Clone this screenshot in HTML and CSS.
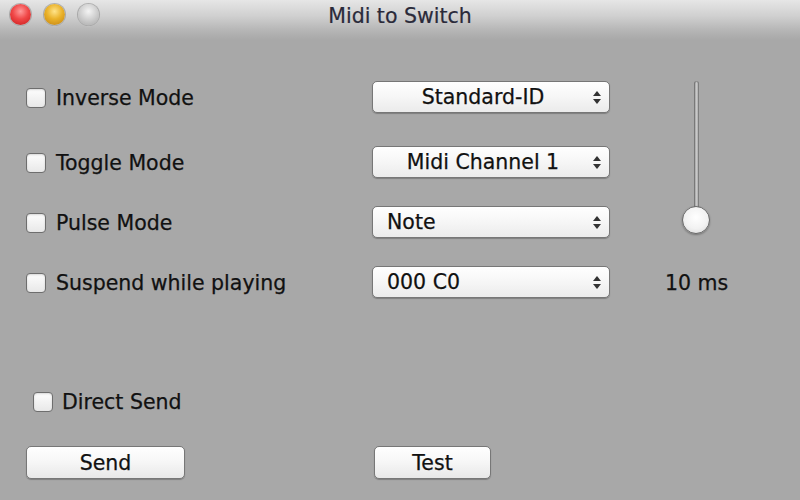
FILE: index.html
```html
<!DOCTYPE html>
<html>
<head>
<meta charset="utf-8">
<link rel="stylesheet" href="styles.css">
</head>
<body>
<div class="window">
  <div class="titlebar">
    <div class="lights">
      <span class="light red"></span>
      <span class="light yellow"></span>
      <span class="light gray"></span>
    </div>
    <div class="title">Midi to Switch</div>
  </div>
  <div class="content">
    <div class="form">
      <label class="check r1"><span class="box"></span>Inverse Mode</label>
      <div class="popup center r1c"><span class="ptext">Standard-ID</span><span class="arrows"><i class="up"></i><i class="down"></i></span></div>
      <div class="slider">
        <div class="track"></div>
        <div class="knob"></div>
      </div>

      <label class="check r2"><span class="box"></span>Toggle Mode</label>
      <div class="popup center r2c"><span class="ptext">Midi Channel 1</span><span class="arrows"><i class="up"></i><i class="down"></i></span></div>

      <label class="check r3"><span class="box"></span>Pulse Mode</label>
      <div class="popup r3c"><span class="ptext">Note</span><span class="arrows"><i class="up"></i><i class="down"></i></span></div>

      <label class="check r4"><span class="box"></span>Suspend while playing</label>
      <div class="popup r4c"><span class="ptext">000 C0</span><span class="arrows"><i class="up"></i><i class="down"></i></span></div>
      <div class="ms">10 ms</div>
    </div>

    <label class="check direct"><span class="box"></span>Direct Send</label>

    <div class="buttons">
      <button class="btn send">Send</button>
      <button class="btn test">Test</button>
    </div>
  </div>
</div>
</body>
</html>
```

FILE: styles.css
```css
html, body {
  margin: 0;
  padding: 0;
  width: 800px;
  height: 500px;
  overflow: hidden;
}
body {
  background: #a8a8a8;
  font-family: "DejaVu Sans", "Liberation Sans", sans-serif;
  color: #111;
}
.window {
  width: 800px;
  height: 500px;
  background: #a8a8a8;
  display: flex;
  flex-direction: column;
}
.titlebar {
  height: 40px;
  background: linear-gradient(#e6e6e6 0%, #d0d0d0 40%, #b6b6b6 75%, #a8a8a8 100%);
  position: relative;
  display: flex;
  justify-content: center;
}
.lights {
  position: absolute;
  left: 10px;
  top: 4px;
  display: flex;
  gap: 13px;
}
.light {
  width: 21px;
  height: 21px;
  border-radius: 50%;
  box-shadow: 0 0 0 1px rgba(90,90,90,0.35), 0 1px 1px rgba(255,255,255,0.6);
}
.light.red {
  background: radial-gradient(circle at 50% 35%, #ff9a9a 0%, #f04848 45%, #c61818 100%);
}
.light.yellow {
  background: radial-gradient(circle at 50% 35%, #ffe48a 0%, #eab22a 45%, #c08010 100%);
}
.light.gray {
  background: radial-gradient(circle at 50% 35%, #f4f4f4 0%, #d2d2d2 45%, #a8a8a8 100%);
}
.title {
  font-size: 20.5px;
  line-height: 20px;
  margin-top: 6px;
  color: #2a2a3a;
  -webkit-text-stroke: 0.2px #2a2a3a;
}
.content {
  display: flex;
  flex-direction: column;
  padding-top: 41px;
}
.form {
  display: grid;
  grid-template-columns: 346px 238px 1fr;
  grid-template-rows: 65px 60px 60px 33px;
  padding-left: 26px;
}
.check {
  display: flex;
  align-items: center;
  gap: 10px;
  font-size: 20.5px;
  height: 33px;
  -webkit-text-stroke: 0.25px #111;
}
.box {
  width: 18px;
  height: 18px;
  border-radius: 4px;
  background: linear-gradient(#fdfdfd, #e8e8e8);
  border: 1px solid #6e6e6e;
  box-shadow: inset 0 1px 2px rgba(0,0,0,0.15);
  flex: none;
  -webkit-text-stroke: 0;
}
.r1, .r1c { grid-row: 1; }
.r2, .r2c { grid-row: 2; }
.r3, .r3c { grid-row: 3; }
.r4, .r4c { grid-row: 4; }
.check.r1, .check.r2, .check.r3, .check.r4 { grid-column: 1; }
.popup {
  grid-column: 2;
  height: 32px;
  box-sizing: border-box;
  border: 1px solid #777;
  border-radius: 5px;
  background: linear-gradient(#ffffff 0%, #f6f6f6 50%, #ebebeb 100%);
  box-shadow: 0 1px 1px rgba(0,0,0,0.25);
  display: flex;
  align-items: center;
  position: relative;
  font-size: 20.5px;
  padding-left: 14px;
  -webkit-text-stroke: 0.25px #111;
}
.popup.center {
  justify-content: center;
  padding-left: 0;
  padding-right: 16px;
}
.arrows {
  position: absolute;
  right: 8px;
  top: 9px;
  display: flex;
  flex-direction: column;
  gap: 3px;
}
.arrows i {
  display: block;
  width: 0;
  height: 0;
  border-left: 4px solid transparent;
  border-right: 4px solid transparent;
}
.arrows .up { border-bottom: 5px solid #333; }
.arrows .down { border-top: 5px solid #333; }
.slider {
  grid-column: 3;
  grid-row: 1 / 4;
  position: relative;
}
.track {
  position: absolute;
  left: 84px;
  top: 0px;
  width: 5px;
  height: 136px;
  border-radius: 3px;
  background: linear-gradient(90deg, #8a8a8a, #c8c8c8 50%, #9a9a9a);
  box-shadow: inset 0 0 0 1px rgba(90,90,90,0.5);
}
.knob {
  position: absolute;
  left: 72px;
  top: 125px;
  width: 28px;
  height: 28px;
  border-radius: 50%;
  box-sizing: border-box;
  border: 1px solid #6a6a6a;
  background: radial-gradient(circle at 50% 40%, #ffffff 0%, #f2f2f2 55%, #d6d6d6 100%);
  box-shadow: 0 1px 2px rgba(0,0,0,0.3);
}
.ms {
  grid-column: 3;
  grid-row: 4;
  font-size: 20.5px;
  display: flex;
  align-items: center;
  padding-left: 55px;
  -webkit-text-stroke: 0.25px #111;
}
.check.direct {
  margin-top: 86px;
  margin-left: 33px;
  gap: 9px;
}
.buttons {
  display: flex;
  margin-top: 28px;
  padding-left: 26px;
}
.btn {
  font-family: "DejaVu Sans", "Liberation Sans", sans-serif;
  font-size: 20.5px;
  color: #111;
  -webkit-text-stroke: 0.25px #111;
  height: 33px;
  border: 1px solid #777;
  border-radius: 5px;
  background: linear-gradient(#ffffff 0%, #f6f6f6 50%, #e8e8e8 100%);
  box-shadow: 0 1px 1px rgba(0,0,0,0.25);
  padding: 0;
  line-height: 28px;
}
.send { width: 159px; }
.test { width: 117px; margin-left: 189px; }
```
